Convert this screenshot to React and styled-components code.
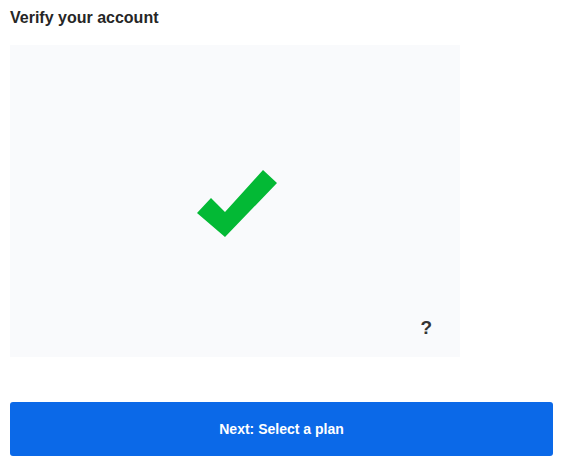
import styled, { createGlobalStyle } from 'styled-components';

const GlobalStyle = createGlobalStyle`
  body {
    margin: 0;
    background: #ffffff;
    font-family: "Liberation Sans", Arial, sans-serif;
  }
`;

const Page = styled.div`
  display: flex;
  flex-direction: column;
  padding: 9px 12px 0 10px;
`;

const Title = styled.h2`
  margin: 0;
  font-size: 16px;
  font-weight: 700;
  color: #262626;
  line-height: 18px;
`;

const Panel = styled.div`
  position: relative;
  margin-top: 18px;
  width: 450px;
  height: 312px;
  background: #f9fafc;
  display: flex;
  align-items: center;
  justify-content: center;
`;

const Check = styled.svg`
  width: 80px;
  height: 67px;
  margin: 4px 0 0 4px;
`;

const Help = styled.span`
  position: absolute;
  right: 28px;
  bottom: 18px;
  font-size: 19px;
  font-weight: 700;
  color: #333;
`;

const NextButton = styled.button`
  margin-top: 45px;
  height: 54px;
  border: none;
  border-radius: 3px;
  background: #0b69e8;
  color: #ffffff;
  font-family: "Liberation Sans", Arial, sans-serif;
  font-size: 14px;
  font-weight: 700;
  cursor: pointer;
`;

export default function App() {
  return (
    <>
      <GlobalStyle />
      <Page>
        <Title>Verify your account</Title>
        <Panel>
          <Check viewBox="197 169 80 67">
            <polygon
              points="197,212 211,197 225,211 263,169 277,182 225,236"
              fill="#03b935"
            />
          </Check>
          <Help>?</Help>
        </Panel>
        <NextButton>Next: Select a plan</NextButton>
      </Page>
    </>
  );
}
